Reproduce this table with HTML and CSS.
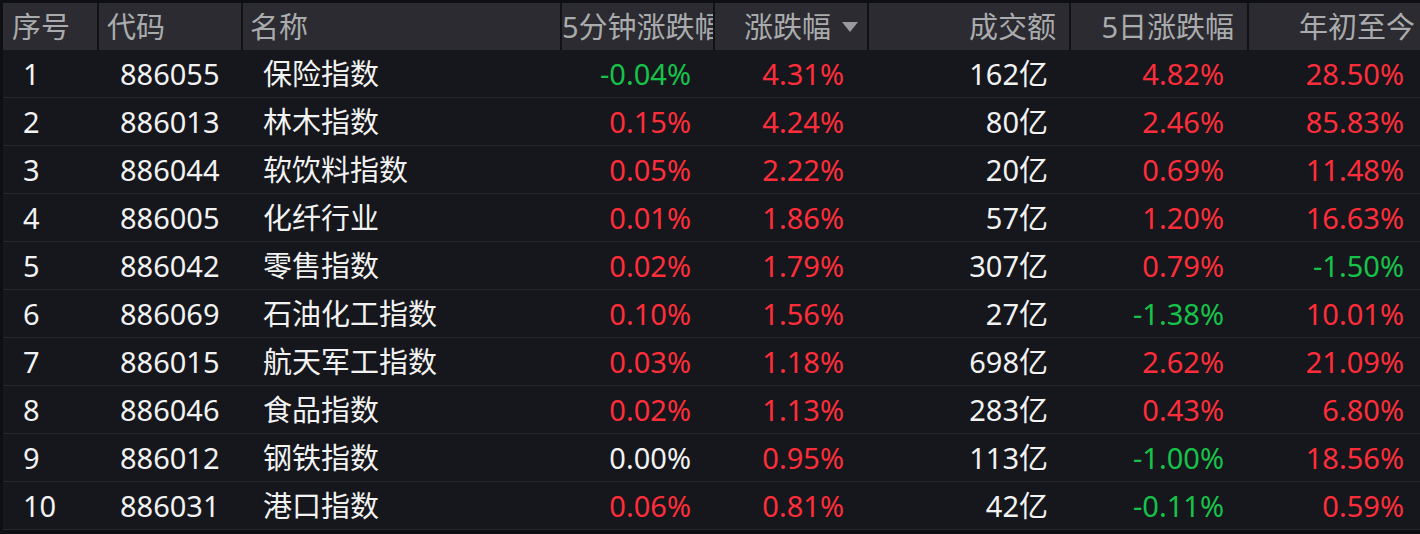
FILE: index.html
```html
<!DOCTYPE html>
<html lang="zh-CN">
<head>
<meta charset="utf-8">
<title>板块行情</title>
<link rel="stylesheet" href="styles.css">
</head>
<body>
<div class="board">
  <div class="row head">
    <div class="c c1">序号</div>
    <div class="c c2">代码</div>
    <div class="c c3">名称</div>
    <div class="c c4 clip">5分钟涨跌幅</div>
    <div class="c c5 r">涨跌幅<span class="tri"></span></div>
    <div class="c c6 r">成交额</div>
    <div class="c c7 r">5日涨跌幅</div>
    <div class="c c8 r">年初至今</div>
  </div>
  <div class="row"><div class="c c1">1</div><div class="c c2">886055</div><div class="c c3">保险指数</div><div class="c c4 r g">-0.04%</div><div class="c c5 r up">4.31%</div><div class="c c6 r">162亿</div><div class="c c7 r up">4.82%</div><div class="c c8 r up">28.50%</div></div>
  <div class="row"><div class="c c1">2</div><div class="c c2">886013</div><div class="c c3">林木指数</div><div class="c c4 r up">0.15%</div><div class="c c5 r up">4.24%</div><div class="c c6 r">80亿</div><div class="c c7 r up">2.46%</div><div class="c c8 r up">85.83%</div></div>
  <div class="row"><div class="c c1">3</div><div class="c c2">886044</div><div class="c c3">软饮料指数</div><div class="c c4 r up">0.05%</div><div class="c c5 r up">2.22%</div><div class="c c6 r">20亿</div><div class="c c7 r up">0.69%</div><div class="c c8 r up">11.48%</div></div>
  <div class="row"><div class="c c1">4</div><div class="c c2">886005</div><div class="c c3">化纤行业</div><div class="c c4 r up">0.01%</div><div class="c c5 r up">1.86%</div><div class="c c6 r">57亿</div><div class="c c7 r up">1.20%</div><div class="c c8 r up">16.63%</div></div>
  <div class="row"><div class="c c1">5</div><div class="c c2">886042</div><div class="c c3">零售指数</div><div class="c c4 r up">0.02%</div><div class="c c5 r up">1.79%</div><div class="c c6 r">307亿</div><div class="c c7 r up">0.79%</div><div class="c c8 r g">-1.50%</div></div>
  <div class="row"><div class="c c1">6</div><div class="c c2">886069</div><div class="c c3">石油化工指数</div><div class="c c4 r up">0.10%</div><div class="c c5 r up">1.56%</div><div class="c c6 r">27亿</div><div class="c c7 r g">-1.38%</div><div class="c c8 r up">10.01%</div></div>
  <div class="row"><div class="c c1">7</div><div class="c c2">886015</div><div class="c c3">航天军工指数</div><div class="c c4 r up">0.03%</div><div class="c c5 r up">1.18%</div><div class="c c6 r">698亿</div><div class="c c7 r up">2.62%</div><div class="c c8 r up">21.09%</div></div>
  <div class="row"><div class="c c1">8</div><div class="c c2">886046</div><div class="c c3">食品指数</div><div class="c c4 r up">0.02%</div><div class="c c5 r up">1.13%</div><div class="c c6 r">283亿</div><div class="c c7 r up">0.43%</div><div class="c c8 r up">6.80%</div></div>
  <div class="row"><div class="c c1">9</div><div class="c c2">886012</div><div class="c c3">钢铁指数</div><div class="c c4 r">0.00%</div><div class="c c5 r up">0.95%</div><div class="c c6 r">113亿</div><div class="c c7 r g">-1.00%</div><div class="c c8 r up">18.56%</div></div>
  <div class="row"><div class="c c1">10</div><div class="c c2">886031</div><div class="c c3">港口指数</div><div class="c c4 r up">0.06%</div><div class="c c5 r up">0.81%</div><div class="c c6 r">42亿</div><div class="c c7 r g">-0.11%</div><div class="c c8 r up">0.59%</div></div>
</div>
</body>
</html>
```

FILE: styles.css
```css
* { box-sizing: border-box; }
html, body {
  margin: 0;
  padding: 0;
  background: #0e0f12;
  width: 1420px;
  height: 534px;
  overflow: hidden;
}
.board {
  padding: 3px 0 0 3px;
  font-family: "Noto Sans", "Noto Sans CJK SC", sans-serif;
  font-size: 29px;
  color: #f2f2f2;
}
.row {
  display: grid;
  grid-template-columns: 96px 144px 319px 153px 154px 202px 178px 171px;
  height: 48px;
  background: #15171c;
  border-bottom: 1px solid #25272d;
}
.row .c {
  display: flex;
  align-items: center;
  white-space: nowrap;
  overflow: hidden;
  line-height: 1;
}
.row .c1 { padding-left: 20px; }
.row .c2 { padding-left: 21px; }
.row .c3 { padding-left: 20px; }
.row .r { justify-content: flex-end; }
.row .c4 { padding-right: 24px; }
.row .c5 { padding-right: 25px; }
.row .c6 { padding-right: 23px; }
.row .c7 { padding-right: 25px; }
.row .c8 { padding-right: 16px; }
.up { color: #ff2d3a; }
.g { color: #17c24a; }

.row.head {
  height: 47px;
  background: #2b2b31;
  border-bottom: 0;
  color: #aaabad;
}
.row.head .c { border-right: 2px solid #111214; }
.row.head .c8 { border-right: 0; }
.row.head .c1 { padding-left: 9px; }
.row.head .c2 { padding-left: 8px; }
.row.head .c3 { padding-left: 7px; }
.row.head .c4.clip { padding: 0; justify-content: flex-start; }
.row.head .c5 { padding-right: 9px; }
.row.head .c6 { padding-right: 13px; }
.row.head .c7 { padding-right: 13px; }
.row.head .c8 { padding-right: 5px; }
.tri {
  width: 0;
  height: 0;
  margin-left: 11px;
  border-left: 8px solid transparent;
  border-right: 8px solid transparent;
  border-top: 10px solid #9a9a9e;
}
```
